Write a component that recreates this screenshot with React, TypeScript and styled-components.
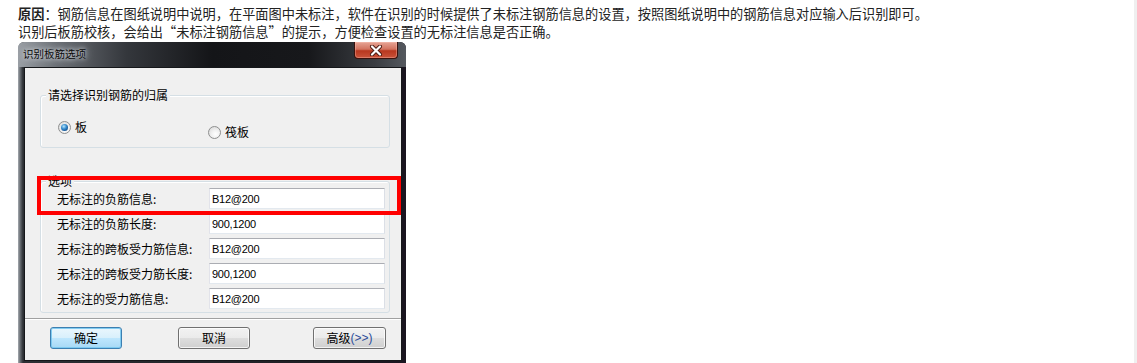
import React from "react";
import styled, { createGlobalStyle } from "styled-components";

const GlobalStyle = createGlobalStyle`
  html, body { margin: 0; padding: 0; background: #ffffff; }
  body { font-family: "Noto Sans CJK SC", "Noto Sans", sans-serif; }
  * { box-sizing: border-box; }
`;

const Page = styled.div`
  display: flex;
  width: 1137px;
  height: 363px;
  overflow: hidden;
  background: #ffffff;
`;

const Article = styled.div`
  flex: 1;
  min-width: 0;
  padding: 5px 0 0 18px;
`;

const ScrollEdge = styled.div`
  width: 3px;
  background: #efefef;
`;

const Paragraph = styled.p`
  margin: 0;
  font-size: 13.2px;
  line-height: 18px;
  color: #222222;
  white-space: nowrap;
`;

const Strong = styled.strong`
  font-weight: 700;
`;

const Dialog = styled.div`
  position: relative;
  margin-top: 1px;
  width: 388px;
  height: 330px;
  display: flex;
  flex-direction: column;
  border-radius: 6px 6px 0 0;
  background: linear-gradient(
    90deg,
    #a7acb1 0px,
    #6c7177 2px,
    #2c2f34 5px,
    #24262b 40%,
    #1e1c22 85%,
    #1a1520 100%
  );
`;

const TitleBar = styled.div`
  height: 25px;
  display: flex;
  align-items: flex-start;
  justify-content: space-between;
  padding-left: 5px;
  border-radius: 6px 6px 0 0;
  background: linear-gradient(
    90deg,
    #9a9fa5 0%,
    #6a6e74 10%,
    #34373c 28%,
    #141518 50%,
    #17181b 75%,
    #3a3d42 92%,
    #55595f 100%
  );
`;

const TitleText = styled.span`
  margin-top: 5px;
  font-size: 10.5px;
  line-height: 14px;
  color: #0a0a0a;
  text-shadow: 0 0 4px rgba(235, 240, 245, 0.95), 0 0 9px rgba(220, 228, 235, 0.85);
`;

const CloseButton = styled.div`
  width: 44px;
  height: 17px;
  margin-right: 8px;
  display: flex;
  align-items: center;
  justify-content: center;
  border: 1px solid #3a120d;
  border-top: none;
  border-radius: 0 0 4px 4px;
  background: linear-gradient(180deg, #e6a595 0%, #d2735f 45%, #b8371f 55%, #c9533a 100%);
  box-shadow: inset 0 0 0 1px rgba(255, 200, 190, 0.35);
`;

const Client = styled.div`
  height: 294px;
  margin: 0 4px 0 6px;
  border: 1px solid #15171a;
  background: #f0f0f0;
  display: flex;
  flex-direction: column;
`;

const GroupBox = styled.div<{ $top: number; $height: number }>`
  position: relative;
  margin: ${(p) => p.$top}px 11px 0 15px;
  height: ${(p) => p.$height}px;
  border: 1px solid #d5dfe5;
  border-radius: 3px;
  box-shadow: inset 1px 1px 0 #ffffff;
`;

const Legend = styled.span`
  position: absolute;
  top: -8px;
  left: 5px;
  padding: 0 2px;
  background: #f0f0f0;
  font-size: 12px;
  line-height: 14px;
  color: #000000;
`;

const RadioRow = styled.div`
  display: grid;
  grid-template-columns: 150px auto;
  align-items: start;
  padding: 24px 0 0 17px;
`;

const RadioItem = styled.label<{ $drop?: number }>`
  display: flex;
  align-items: center;
  gap: 4px;
  margin-top: ${(p) => p.$drop ?? 0}px;
  font-size: 12px;
  line-height: 14px;
  color: #000000;
`;

const RadioCircle = styled.span<{ $checked?: boolean }>`
  position: relative;
  width: 13px;
  height: 13px;
  border-radius: 50%;
  border: 1px solid #8e8f8f;
  background: radial-gradient(circle at 60% 65%, #ffffff 0%, #f1f1f1 40%, #d4d4d4 100%);
  &::after {
    content: "";
    display: ${(p) => (p.$checked ? "block" : "none")};
    position: absolute;
    left: 2px;
    top: 2px;
    width: 7px;
    height: 7px;
    border-radius: 50%;
    background: radial-gradient(circle at 40% 35%, #b9e6fb 0%, #3a8fd0 40%, #0d4a8a 80%, #0a2f5c 100%);
  }
`;

const OptionGrid = styled.div`
  display: grid;
  grid-template-columns: 152px 176px;
  grid-auto-rows: 21px;
  row-gap: 4px;
  padding: 6px 0 0 16px;
`;

const FieldLabel = styled.span`
  font-size: 12px;
  line-height: 21px;
  color: #000000;
  white-space: nowrap;
`;

const TextBox = styled.input`
  width: 176px;
  height: 21px;
  margin: 0;
  padding: 0 0 0 2px;
  border: 1px solid;
  border-color: #abadb3 #dbdfe6 #e3e9ef #e2e3ea;
  background: #ffffff;
  font-family: "Liberation Sans", Arial, sans-serif;
  font-size: 11px;
  letter-spacing: -0.25px;
  color: #000000;
  outline: none;
`;

const Separator = styled.div`
  margin-top: 5px;
  height: 1px;
  background: #a0a0a0;
  box-shadow: 0 1px 0 #ffffff;
`;

const ButtonBar = styled.div`
  display: flex;
  margin-top: 8px;
  padding-left: 25px;
`;

const Button = styled.div<{ $width: number; $gap?: number; $default?: boolean }>`
  width: ${(p) => p.$width}px;
  height: 22px;
  margin-left: ${(p) => p.$gap ?? 0}px;
  display: flex;
  align-items: center;
  justify-content: center;
  border-radius: 3px;
  font-size: 12px;
  line-height: 14px;
  color: #000000;
  border: 1px solid ${(p) => (p.$default ? "#3c7fb1" : "#707070")};
  background: ${(p) =>
    p.$default
      ? "linear-gradient(180deg, #eaf6fd 0%, #d9f0fc 48%, #bee6fd 52%, #a7d9f5 100%)"
      : "linear-gradient(180deg, #f2f2f2 0%, #ebebeb 48%, #dddddd 52%, #cfcfcf 100%)"};
  box-shadow: inset 0 0 0 1px
    ${(p) => (p.$default ? "rgba(120, 200, 240, 0.9)" : "rgba(255, 255, 255, 0.75)")};
`;

const Chevrons = styled.span`
  color: #2b4c9a;
  font-family: "Liberation Sans", Arial, sans-serif;
`;

const Highlight = styled.div`
  position: absolute;
  left: 19px;
  top: 134px;
  width: 364px;
  height: 39px;
  border: 4px solid #ff0000;
  pointer-events: none;
`;

const options = [
  { label: "无标注的负筋信息:", value: "B12@200" },
  { label: "无标注的负筋长度:", value: "900,1200" },
  { label: "无标注的跨板受力筋信息:", value: "B12@200" },
  { label: "无标注的跨板受力筋长度:", value: "900,1200" },
  { label: "无标注的受力筋信息:", value: "B12@200" },
];

const CloseIcon = () => (
  <svg width="16" height="11" viewBox="0 0 16 11">
    <path d="M4 1.5 L12 9.5 M12 1.5 L4 9.5" stroke="#4a1a12" strokeWidth="4" strokeLinecap="round" />
    <path d="M4 1.5 L12 9.5 M12 1.5 L4 9.5" stroke="#ffffff" strokeWidth="2.2" strokeLinecap="round" />
  </svg>
);

export default function App() {
  return (
    <>
      <GlobalStyle />
      <Page>
        <Article>
          <Paragraph>
            <Strong>原因</Strong>：钢筋信息在图纸说明中说明，在平面图中未标注，软件在识别的时候提供了未标注钢筋信息的设置，按照图纸说明中的钢筋信息对应输入后识别即可。
          </Paragraph>
          <Paragraph>识别后板筋校核，会给出“未标注钢筋信息”的提示，方便检查设置的无标注信息是否正确。</Paragraph>
          <Dialog>
            <TitleBar>
              <TitleText>识别板筋选项</TitleText>
              <CloseButton>
                <CloseIcon />
              </CloseButton>
            </TitleBar>
            <Client>
              <GroupBox $top={27} $height={53}>
                <Legend>请选择识别钢筋的归属</Legend>
                <RadioRow>
                  <RadioItem>
                    <RadioCircle $checked />
                    板
                  </RadioItem>
                  <RadioItem $drop={5}>
                    <RadioCircle />
                    筏板
                  </RadioItem>
                </RadioRow>
              </GroupBox>
              <GroupBox $top={33} $height={132}>
                <Legend>选项</Legend>
                <OptionGrid>
                  {options.map((o, i) => (
                    <React.Fragment key={i}>
                      <FieldLabel>{o.label}</FieldLabel>
                      <TextBox readOnly defaultValue={o.value} />
                    </React.Fragment>
                  ))}
                </OptionGrid>
              </GroupBox>
              <Separator />
              <ButtonBar>
                <Button $width={72} $default>
                  确定
                </Button>
                <Button $width={72} $gap={56}>
                  取消
                </Button>
                <Button $width={73} $gap={63}>
                  高级<Chevrons>(&gt;&gt;)</Chevrons>
                </Button>
              </ButtonBar>
            </Client>
            <Highlight />
          </Dialog>
        </Article>
        <ScrollEdge />
      </Page>
    </>
  );
}
